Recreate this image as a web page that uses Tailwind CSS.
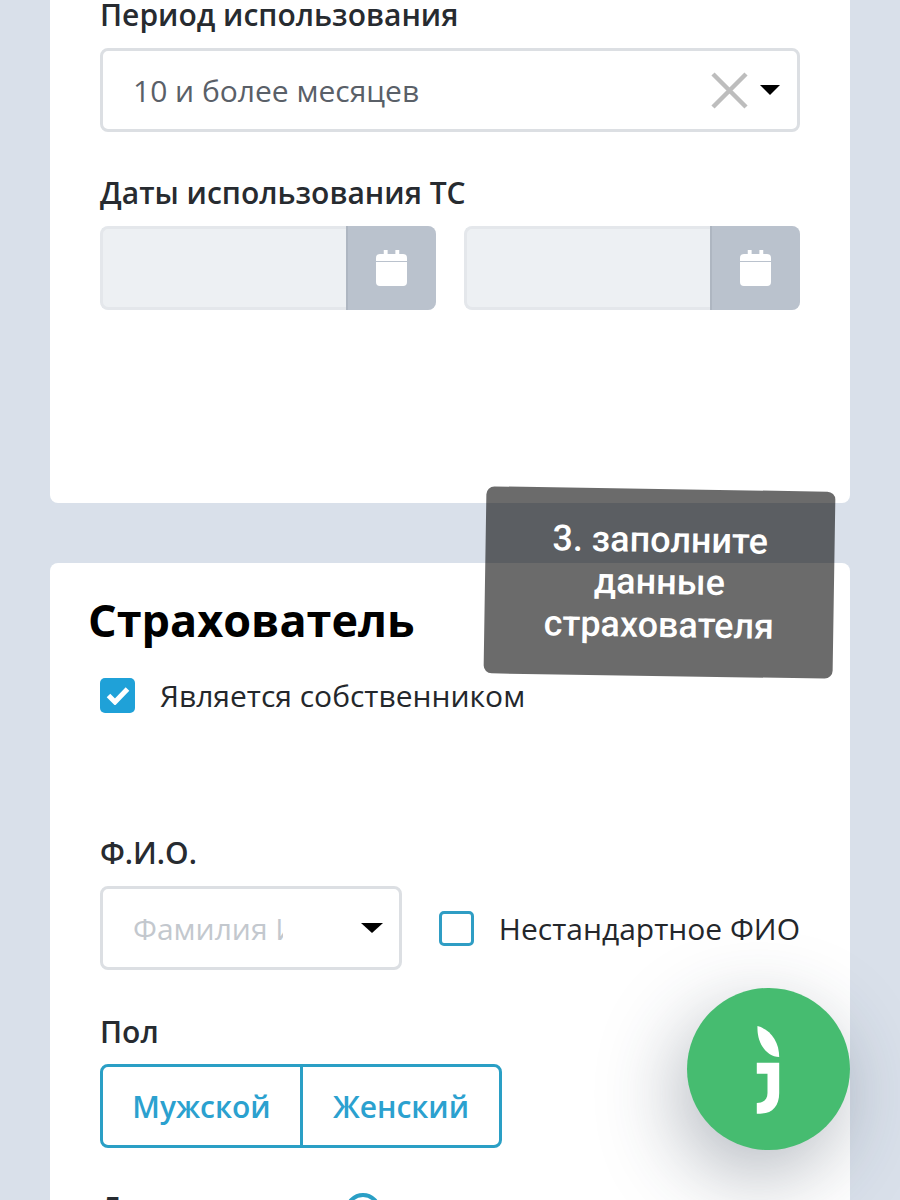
<!DOCTYPE html>
<html lang="ru">
  <head>
    <meta charset="UTF-8" />
    <meta name="viewport" content="width=device-width, initial-scale=1.0" />
    <title>Страхователь</title>
    <script src="https://cdn.jsdelivr.net/npm/@tailwindcss/browser@4"></script>
  </head>
  <body class="bg-[#d9e0ea] font-['Open_Sans',sans-serif]">
    <div class="relative h-[1200px] w-[900px] overflow-hidden px-[50px]">
      <!-- Период и даты -->
      <section class="-mt-[5px] h-[508px] rounded-b-lg bg-white px-[50px]">
        <div class="text-[30px] leading-[40px] font-semibold text-[#272b30]">Период использования</div>
        <div class="mt-[13px] flex h-[84px] items-center rounded-lg border-[3px] border-[#dcdfe3] pr-[17px] pl-[30px]">
          <span class="flex-1 text-[30px] text-[#5a6068]">10 и более месяцев</span>
          <svg class="mr-[12px]" width="37" height="37" viewBox="0 0 37 37" fill="none" stroke="#bdbdbd" stroke-width="4.5">
            <path d="M2 2 35 35M35 2 2 35" />
          </svg>
          <span class="h-0 w-0 border-x-[10px] border-t-[10px] border-x-transparent border-t-black"></span>
        </div>

        <div class="mt-[41px] text-[30px] leading-[40px] font-semibold text-[#272b30]">Даты использования ТС</div>
        <div class="mt-[13px] grid grid-cols-2 gap-[28px]">
          <div class="flex h-[84px] overflow-hidden rounded-lg bg-[#edf0f3]">
            <div class="flex-1 rounded-l-lg border-[3px] border-r-0 border-[#e4e7eb]"></div>
            <div class="flex w-[90px] items-center justify-center border-l-[2px] border-[#aeb6c1] bg-[#bac2cd] pr-[2px]">
              <svg width="31" height="36" viewBox="0 0 32 36" preserveAspectRatio="none" fill="#fff">
                <path d="M8 0h4v4h8V0h4v4h4a4 4 0 0 1 4 4v3H0V8a4 4 0 0 1 4-4h4zM0 12h32v20a4 4 0 0 1-4 4H4a4 4 0 0 1-4-4z" />
              </svg>
            </div>
          </div>
          <div class="flex h-[84px] overflow-hidden rounded-lg bg-[#edf0f3]">
            <div class="flex-1 rounded-l-lg border-[3px] border-r-0 border-[#e4e7eb]"></div>
            <div class="flex w-[90px] items-center justify-center border-l-[2px] border-[#aeb6c1] bg-[#bac2cd] pr-[2px]">
              <svg width="31" height="36" viewBox="0 0 32 36" preserveAspectRatio="none" fill="#fff">
                <path d="M8 0h4v4h8V0h4v4h4a4 4 0 0 1 4 4v3H0V8a4 4 0 0 1 4-4h4zM0 12h32v20a4 4 0 0 1-4 4H4a4 4 0 0 1-4-4z" />
              </svg>
            </div>
          </div>
        </div>
      </section>

      <!-- Страхователь -->
      <section class="mt-[60px] h-[700px] rounded-t-lg bg-white px-[50px] pt-[27px]">
        <h2 class="-ml-[12px] text-[45px] leading-[60px] font-bold text-black">Страхователь</h2>
        <div class="mt-[20px] flex h-[50px] items-center gap-[25px]">
          <span class="flex h-[35px] w-[35px] items-center justify-center rounded-[5px] bg-[#1fa1d8]">
            <svg width="24" height="19" viewBox="0 0 24 19" fill="none" stroke="#fff" stroke-width="5">
              <path d="M2.5 9.5 9 16 21.5 3" />
            </svg>
          </span>
          <span class="text-[30px] text-[#24272b]">Является собственником</span>
        </div>

        <div class="mt-[113px] text-[30px] leading-[40px] font-semibold text-[#272b30]">Ф.И.О.</div>
        <div class="mt-[13px] flex items-center">
          <div class="flex h-[84px] w-[302px] items-center rounded-lg border-[3px] border-[#dcdfe3] pr-[16px] pl-[30px]">
            <span class="w-[150px] overflow-hidden text-[30px] whitespace-nowrap text-[#c3c8ce]">Фамилия Имя</span>
            <span class="ml-auto h-0 w-0 border-x-[11px] border-t-[10px] border-x-transparent border-t-black"></span>
          </div>
          <span class="ml-[37px] h-[35px] w-[35px] rounded-[5px] border-[3px] border-[#2f9dc4]"></span>
          <span class="ml-[25px] text-[30px] whitespace-nowrap text-[#24272b]">Нестандартное ФИО</span>
        </div>

        <div class="mt-[42px] text-[30px] leading-[40px] font-semibold text-[#272b30]">Пол</div>
        <div class="mt-[12px] flex h-[84px] w-[402px] rounded-lg border-[3px] border-[#2a9fc5] text-[30px] font-semibold text-[#2ba1cf]">
          <button class="w-[200px] border-r-[3px] border-[#2a9fc5]">Мужской</button>
          <button class="flex-1">Женский</button>
        </div>

        <div class="mt-[45px] flex items-start text-[30px] leading-[40px] font-semibold text-[#272b30]">
          <span class="-mt-[5px] w-[245px]">Дата рождения</span>
          <span class="h-[36px] w-[36px] rounded-full border-[4px] border-[#2a9fc5]"></span>
        </div>
      </section>

      <!-- Подсказка поверх скриншота -->
      <div class="absolute top-[489px] left-[485px] flex h-[187px] w-[349px] rotate-[0.9deg] items-center justify-center rounded-lg bg-black/58 text-center font-['Roboto',sans-serif] text-[36px] leading-[42.5px] font-medium text-white">
        <p>3. заполните<br />данные<br />страхователя</p>
      </div>

      <!-- Кнопка чата -->
      <div class="absolute top-[988px] left-[687px] flex h-[162px] w-[163px] items-center justify-center rounded-full bg-[#46bc70] shadow-[-10px_25px_80px_rgba(40,55,75,0.35)]">
        <svg width="37" height="97" viewBox="270 180 110 290" fill="#fff">
          <path d="M292 195C330 205 357 240 357 288 320 285 290 250 292 195Z" />
          <path d="M290 305H357V395C357 435 335 457 300 457H290V425C310 425 322 415 322 395V338H290Z" />
        </svg>
      </div>
    </div>
  </body>
</html>
